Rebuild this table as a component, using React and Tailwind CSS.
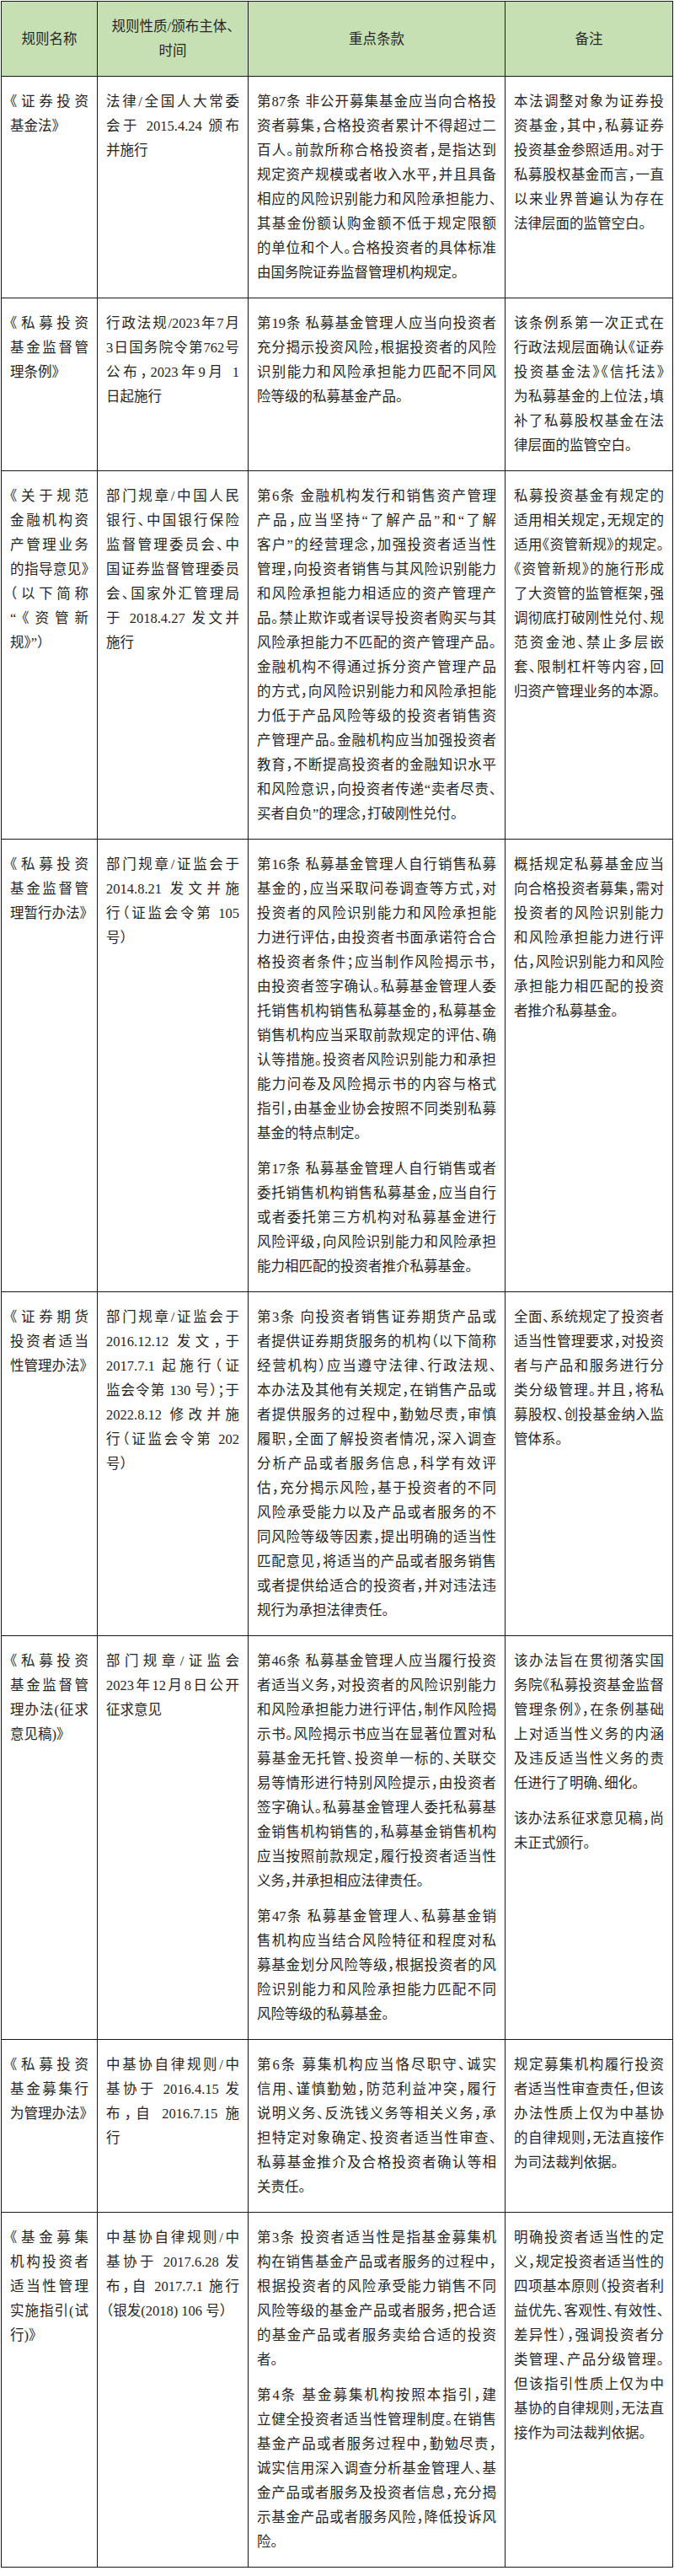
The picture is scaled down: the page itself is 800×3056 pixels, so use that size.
import React from "react";

const rows = [
  {
    name: [["《证券投资", "基金法》"]],
    kind: [["法律/全国人大常委", "会于 2015.4.24 颁布", "并施行"]],
    terms: [
      [
        "第87条  非公开募集基金应当向合格投",
        "资者募集，合格投资者累计不得超过二",
        "百人。前款所称合格投资者，是指达到",
        "规定资产规模或者收入水平，并且具备",
        "相应的风险识别能力和风险承担能力、",
        "其基金份额认购金额不低于规定限额",
        "的单位和个人。合格投资者的具体标准",
        "由国务院证券监督管理机构规定。",
      ],
    ],
    note: [
      [
        "本法调整对象为证券投",
        "资基金，其中，私募证券",
        "投资基金参照适用。对于",
        "私募股权基金而言，一直",
        "以来业界普遍认为存在",
        "法律层面的监管空白。",
      ],
    ],
  },
  {
    name: [["《私募投资", "基金监督管", "理条例》"]],
    kind: [["行政法规/2023年7月", "3日国务院令第762号", "公布，2023年9月 1", "日起施行"]],
    terms: [
      [
        "第19条  私募基金管理人应当向投资者",
        "充分揭示投资风险，根据投资者的风险",
        "识别能力和风险承担能力匹配不同风",
        "险等级的私募基金产品。",
      ],
    ],
    note: [
      [
        "该条例系第一次正式在",
        "行政法规层面确认《证券",
        "投资基金法》《信托法》",
        "为私募基金的上位法，填",
        "补了私募股权基金在法",
        "律层面的监管空白。",
      ],
    ],
  },
  {
    name: [["《关于规范", "金融机构资", "产管理业务", "的指导意见》", "（以下简称", "“《资管新", "规》”）"]],
    kind: [
      [
        "部门规章/中国人民",
        "银行、中国银行保险",
        "监督管理委员会、中",
        "国证券监督管理委员",
        "会、国家外汇管理局",
        "于 2018.4.27 发文并",
        "施行",
      ],
    ],
    terms: [
      [
        "第6条  金融机构发行和销售资产管理",
        "产品，应当坚持“了解产品”和“了解",
        "客户”的经营理念，加强投资者适当性",
        "管理，向投资者销售与其风险识别能力",
        "和风险承担能力相适应的资产管理产",
        "品。禁止欺诈或者误导投资者购买与其",
        "风险承担能力不匹配的资产管理产品。",
        "金融机构不得通过拆分资产管理产品",
        "的方式，向风险识别能力和风险承担能",
        "力低于产品风险等级的投资者销售资",
        "产管理产品。金融机构应当加强投资者",
        "教育，不断提高投资者的金融知识水平",
        "和风险意识，向投资者传递“卖者尽责、",
        "买者自负”的理念，打破刚性兑付。",
      ],
    ],
    note: [
      [
        "私募投资基金有规定的",
        "适用相关规定，无规定的",
        "适用《资管新规》的规定。",
        "《资管新规》的施行形成",
        "了大资管的监管框架，强",
        "调彻底打破刚性兑付、规",
        "范资金池、禁止多层嵌",
        "套、限制杠杆等内容，回",
        "归资产管理业务的本源。",
      ],
    ],
  },
  {
    name: [["《私募投资", "基金监督管", "理暂行办法》"]],
    kind: [["部门规章/证监会于", "2014.8.21 发文并施", "行（证监会令第 105", "号）"]],
    terms: [
      [
        "第16条  私募基金管理人自行销售私募",
        "基金的，应当采取问卷调查等方式，对",
        "投资者的风险识别能力和风险承担能",
        "力进行评估，由投资者书面承诺符合合",
        "格投资者条件；应当制作风险揭示书，",
        "由投资者签字确认。私募基金管理人委",
        "托销售机构销售私募基金的，私募基金",
        "销售机构应当采取前款规定的评估、确",
        "认等措施。投资者风险识别能力和承担",
        "能力问卷及风险揭示书的内容与格式",
        "指引，由基金业协会按照不同类别私募",
        "基金的特点制定。",
      ],
      [
        "第17条  私募基金管理人自行销售或者",
        "委托销售机构销售私募基金，应当自行",
        "或者委托第三方机构对私募基金进行",
        "风险评级，向风险识别能力和风险承担",
        "能力相匹配的投资者推介私募基金。",
      ],
    ],
    note: [
      [
        "概括规定私募基金应当",
        "向合格投资者募集，需对",
        "投资者的风险识别能力",
        "和风险承担能力进行评",
        "估，风险识别能力和风险",
        "承担能力相匹配的投资",
        "者推介私募基金。",
      ],
    ],
  },
  {
    name: [["《证券期货", "投资者适当", "性管理办法》"]],
    kind: [
      [
        "部门规章/证监会于",
        "2016.12.12 发文，于",
        "2017.7.1 起施行（证",
        "监会令第 130 号）；于",
        "2022.8.12 修改并施",
        "行（证监会令第 202",
        "号）",
      ],
    ],
    terms: [
      [
        "第3条  向投资者销售证券期货产品或",
        "者提供证券期货服务的机构（以下简称",
        "经营机构）应当遵守法律、行政法规、",
        "本办法及其他有关规定，在销售产品或",
        "者提供服务的过程中，勤勉尽责，审慎",
        "履职，全面了解投资者情况，深入调查",
        "分析产品或者服务信息，科学有效评",
        "估，充分揭示风险，基于投资者的不同",
        "风险承受能力以及产品或者服务的不",
        "同风险等级等因素，提出明确的适当性",
        "匹配意见，将适当的产品或者服务销售",
        "或者提供给适合的投资者，并对违法违",
        "规行为承担法律责任。",
      ],
    ],
    note: [
      [
        "全面、系统规定了投资者",
        "适当性管理要求，对投资",
        "者与产品和服务进行分",
        "类分级管理。并且，将私",
        "募股权、创投基金纳入监",
        "管体系。",
      ],
    ],
  },
  {
    name: [["《私募投资", "基金监督管", "理办法(征求", "意见稿)》"]],
    kind: [["部门规章/证监会", "2023年12月8日公开", "征求意见"]],
    terms: [
      [
        "第46条  私募基金管理人应当履行投资",
        "者适当义务，对投资者的风险识别能力",
        "和风险承担能力进行评估，制作风险揭",
        "示书。风险揭示书应当在显著位置对私",
        "募基金无托管、投资单一标的、关联交",
        "易等情形进行特别风险提示，由投资者",
        "签字确认。私募基金管理人委托私募基",
        "金销售机构销售的，私募基金销售机构",
        "应当按照前款规定，履行投资者适当性",
        "义务，并承担相应法律责任。",
      ],
      [
        "第47条  私募基金管理人、私募基金销",
        "售机构应当结合风险特征和程度对私",
        "募基金划分风险等级，根据投资者的风",
        "险识别能力和风险承担能力匹配不同",
        "风险等级的私募基金。",
      ],
    ],
    note: [
      [
        "该办法旨在贯彻落实国",
        "务院《私募投资基金监督",
        "管理条例》，在条例基础",
        "上对适当性义务的内涵",
        "及违反适当性义务的责",
        "任进行了明确、细化。",
      ],
      ["该办法系征求意见稿，尚", "未正式颁行。"],
    ],
  },
  {
    name: [["《私募投资", "基金募集行", "为管理办法》"]],
    kind: [["中基协自律规则/中", "基协于 2016.4.15 发", "布，自 2016.7.15 施", "行"]],
    terms: [
      [
        "第6条  募集机构应当恪尽职守、诚实",
        "信用、谨慎勤勉，防范利益冲突，履行",
        "说明义务、反洗钱义务等相关义务，承",
        "担特定对象确定、投资者适当性审查、",
        "私募基金推介及合格投资者确认等相",
        "关责任。",
      ],
    ],
    note: [
      [
        "规定募集机构履行投资",
        "者适当性审查责任，但该",
        "办法性质上仅为中基协",
        "的自律规则，无法直接作",
        "为司法裁判依据。",
      ],
    ],
  },
  {
    name: [["《基金募集", "机构投资者", "适当性管理", "实施指引(试", "行)》"]],
    kind: [["中基协自律规则/中", "基协于 2017.6.28 发", "布，自 2017.7.1 施行", "（银发(2018) 106 号）"]],
    terms: [
      [
        "第3条  投资者适当性是指基金募集机",
        "构在销售基金产品或者服务的过程中，",
        "根据投资者的风险承受能力销售不同",
        "风险等级的基金产品或者服务，把合适",
        "的基金产品或者服务卖给合适的投资",
        "者。",
      ],
      [
        "第4条  基金募集机构按照本指引，建",
        "立健全投资者适当性管理制度。在销售",
        "基金产品或者服务过程中，勤勉尽责，",
        "诚实信用深入调查分析基金管理人、基",
        "金产品或者服务及投资者信息，充分揭",
        "示基金产品或者服务风险，降低投诉风",
        "险。",
      ],
    ],
    note: [
      [
        "明确投资者适当性的定",
        "义，规定投资者适当性的",
        "四项基本原则（投资者利",
        "益优先、客观性、有效性、",
        "差异性），强调投资者分",
        "类管理、产品分级管理。",
        "但该指引性质上仅为中",
        "基协的自律规则，无法直",
        "接作为司法裁判依据。",
      ],
    ],
  },
];

// one visual line per entry; all but a paragraph's last line are stretched edge to edge
function Paragraphs({ paras }) {
  return (
    <>
      {paras.map((lines, p) => (
        <div key={p} className={p > 0 ? "mt-[13px]" : ""}>
          {lines.map((line, i) => (
            <div
              key={i}
              className={
                i === lines.length - 1
                  ? "whitespace-nowrap"
                  : "whitespace-nowrap text-justify [text-align-last:justify]"
              }
            >
              {line}
            </div>
          ))}
        </div>
      ))}
    </>
  );
}

const cols = "grid grid-cols-[114px_179px_305px_199px] border-b border-[#1a1a1a]";
const cell = "border-r border-[#1a1a1a] px-[10px] pt-[15px] pb-[15px]";
const head = "border-r border-[#1a1a1a] h-[88px] flex flex-col items-center justify-center text-center";

export default function App() {
  return (
    <div className="min-h-screen bg-white pt-px">
      <div className="ml-px w-[798px] border-l border-t border-[#1a1a1a] text-[16.5px] leading-[29px] text-[#262626] font-['Liberation_Serif','Noto_Sans_CJK_SC',serif] [font-feature-settings:'halt']">
        {/* Header */}
        <div className={`${cols} bg-[#c6e0b4]`}>
          <div className={head}>规则名称</div>
          <div className={head}>
            <div>规则性质/颁布主体、</div>
            <div>时间</div>
          </div>
          <div className={head}>重点条款</div>
          <div className={head}>备注</div>
        </div>

        {/* Rows */}
        {rows.map((row, r) => (
          <div key={r} className={cols}>
            <div className={cell}>
              <Paragraphs paras={row.name} />
            </div>
            <div className={cell}>
              <Paragraphs paras={row.kind} />
            </div>
            <div className={cell}>
              <Paragraphs paras={row.terms} />
            </div>
            <div className={cell}>
              <Paragraphs paras={row.note} />
            </div>
          </div>
        ))}
      </div>
    </div>
  );
}
